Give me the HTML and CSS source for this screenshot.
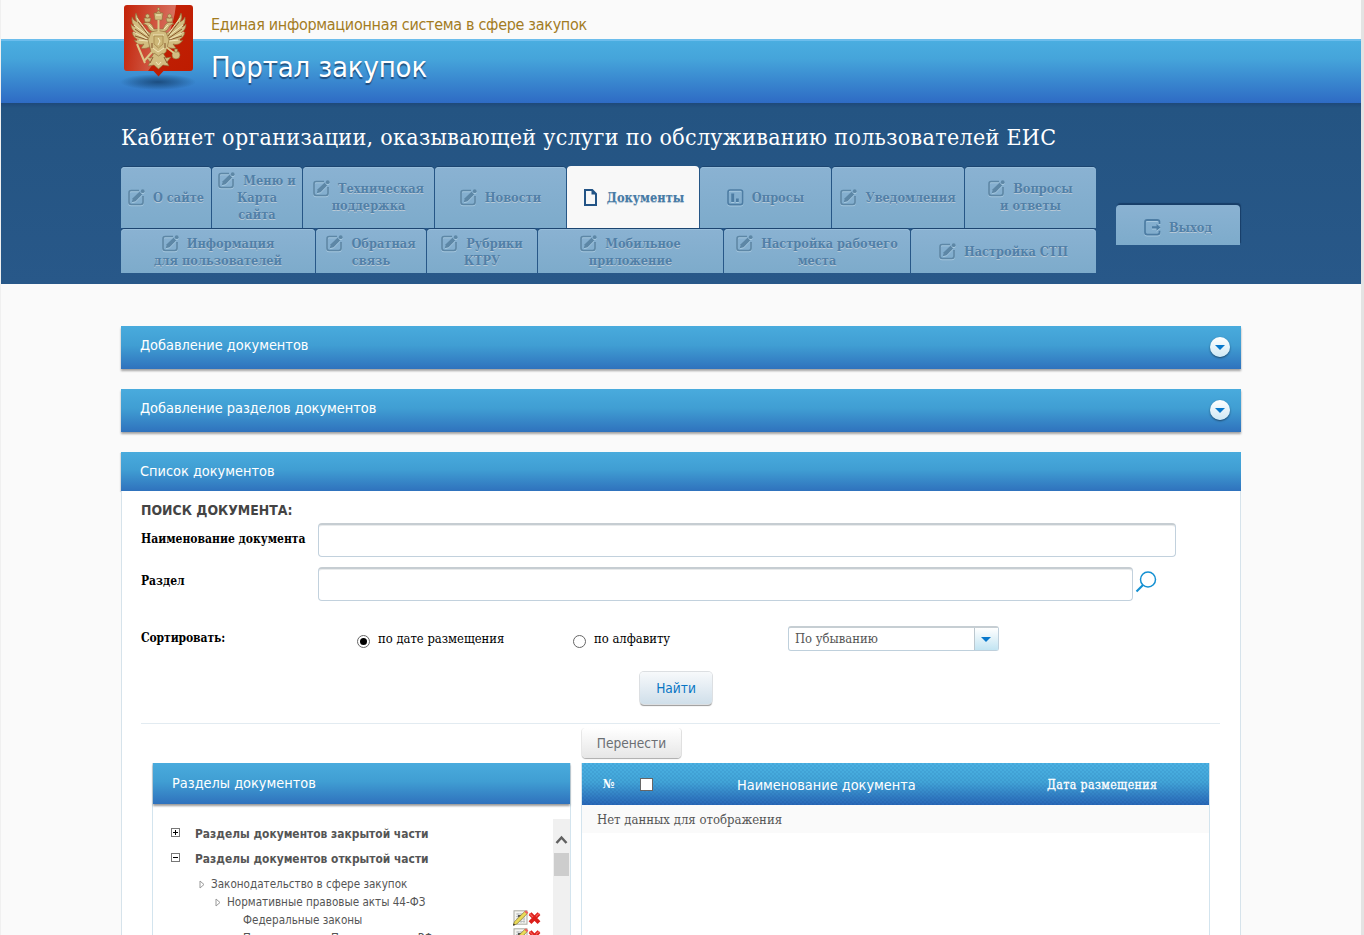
FILE: index.html
```html
<!DOCTYPE html>
<html lang="ru">
<head>
<meta charset="utf-8">
<title>Портал закупок</title>
<link rel="stylesheet" href="styles.css">
</head>
<body>
<svg class="defs" width="0" height="0">
  <defs>
    <linearGradient id="red" x1="0" y1="0" x2="1" y2="1"><stop offset="0" stop-color="#c42208"/><stop offset="1" stop-color="#bd1c00"/></linearGradient>
    <linearGradient id="shine" x1="0" y1="0" x2="1" y2=".2"><stop offset="0" stop-color="#fff" stop-opacity="0"/><stop offset="1" stop-color="#fff" stop-opacity=".38"/></linearGradient>
    <radialGradient id="shade"><stop offset="0" stop-color="#123a66" stop-opacity=".75"/><stop offset=".5" stop-color="#123a66" stop-opacity=".4"/><stop offset="1" stop-color="#123a66" stop-opacity="0"/></radialGradient>
  </defs>
  <symbol id="edit" viewBox="0 0 17 17"><path d="M11 1.500H3.200Q1 1.500 1 3.700v9.600q0 2.200 2.200 2.200h9.600q2.200 0 2.200-2.200V7" fill="none" stroke="currentColor" stroke-width="1.700"/><path d="M3.800 13.200l.9-3.900 6.800-6.500 2.700 2.700-6.600 6.700z" fill="currentColor"/><circle cx="14.700" cy="2.200" r="1.900" fill="currentColor"/></symbol>
  <symbol id="doc" viewBox="0 0 17 17"><path d="M3 1h7.200L14 5v11H3z" fill="none" stroke="currentColor" stroke-width="2"/><path d="M9.500 1v4.600H14z" fill="currentColor"/></symbol>
  <symbol id="poll" viewBox="0 0 17 17"><rect x="1" y="1" width="14.600" height="14.600" rx="2.200" fill="none" stroke="currentColor" stroke-width="1.700"/><path d="M4.200 4.500h3V13h-3zM9 9.500h2.800V13H9z" fill="currentColor"/></symbol>
  <symbol id="exit" viewBox="0 0 17 17"><path d="M15.500 5V3.300Q15.500 1 13.200 1H3.200Q1 1 1 3.300v10Q1 15.600 3.200 15.600h10q2.300 0 2.300-2.300v-1.500" fill="none" stroke="currentColor" stroke-width="1.800"/><path d="M8 7.200h4.500V5l4 3.400-4 3.400V9.500H8z" fill="currentColor"/></symbol>
  <symbol id="rowicons" viewBox="0 0 28 16">
    <rect x="1" y=".8" width="13" height="13.400" fill="#f4f4f0" stroke="#aaaaa2"/><path d="M3 4h9M3 6.500h9M3 9h9M3 11.500h9M5 3v10M8 3v10M11 3v10" stroke="#b4b9bb" stroke-width=".8"/><path d="M5 5h3v2H5z" fill="#555"/><path d="M.3 15.300l1.200-3.600L11.800 1.400l2.300 2.300L3.800 14z" fill="#eadb58" stroke="#88752d" stroke-width=".7"/><path d="M11.400 1.800L13 .3l2.400 2.200L13.900 4z" fill="#ef6460"/><path d="M0 15.500l.7-2 1.500 1.400z" fill="#222"/>
    <path d="M17 3.700l9 9M26 3.700l-9 9" stroke="#dc1e1a" stroke-width="4"/><path d="M16.500 3.500l3.500 3.500M26.200 3.200l-3.300 3.300" stroke="#f45c55" stroke-width="1.300"/>
  </symbol>
</svg>
<header class="top">
  <div class="wrap brand">
    <svg class="emblem" width="80" height="90" viewBox="0 0 80 90">
      <ellipse cx="38" cy="82" rx="38" ry="8" fill="url(#shade)"/>
      <path d="M5 5h65q3 0 3 3v60q0 3-3 3H43.500l-5 5.500-5-5.500H7q-3 0-3-3V8q0-3 3-3z" fill="url(#red)"/>
      <path d="M5 5h51Q52 40 28 71H7q-3 0-3-3V8q0-3 1-3z" fill="url(#shine)"/>
      <g fill="#d2bd80" stroke="#8d6b38" stroke-width=".6">
        <path d="M33 35Q21 29 16 13q-2 4 1 9-4-2-5-5-1 6 3 10-3-1-4-3 0 6 5 9-3 0-4-1 1 6 7 8-3 1-5 0 4 6 10 4-2 3-3 4 6 2 12-4z"/>
        <path d="M44 35q12-6 17-22 2 4-1 9 4-2 5-5 1 6-3 10 3-1 4-3 0 6-5 9 3 0 4-1-1 6-7 8 3 1 5 0-4 6-10 4 2 3 3 4-6 2-12-4z"/>
        <path d="M32 25q-4-5-9-1 4 0 5 3 1 4 6 5l4 1 5-1q5-1 6-5 1-3 5-3-5-4-9 1l-2 4h-9z"/>
        <path d="M31 32q7-3 15 0l3 8-3 12-7.500 6-7.500-6-3-12z"/>
        <path d="M34 53l4.500 3 4.500-3 3 5 5-1-4 5 2 4-6-1-4.500 4-4.500-4-6 1 2-4-4-5 5 1z"/>
        <path d="M34 13h9l-1 7h-7z"/><path d="M36 13q2.500-4 5 0z"/><circle cx="38.500" cy="9" r="1.300"/>
        <path d="M24 18h7l-1 4h-5zM46 18h7l-1 4h-5z"/><circle cx="27.500" cy="16" r="2"/><circle cx="49.500" cy="16" r="2"/>
        <circle cx="56" cy="55" r="4"/><path d="M54.500 49h3v3h-3z"/>
      </g>
      <path d="M17 44l8 19M24 61l8-9M54 53l-8-6M38.500 20v12" fill="none" stroke="#dcc889" stroke-width="2"/>
      <path d="M18 22l11 14M15 29l13 9M15 36l13 4M59 22L48 36M62 29l-13 9M62 36l-13 4M33 57l-3 6M44 57l3 6M32 43v5M45 43v5" stroke="#7e4b22" stroke-width=".9"/>
      <path d="M17 18l11 15M14 25l13 10M13 32l14 7M17 40l11 1M60 18L49 33M63 25L50 35M64 32l-14 7M60 40l-11 1M33 35h11M33 48l5 4 6-4M29 25l4 4M48 25l-4 4M36 15h5M36 62l2.500 3 2.500-3" fill="none" stroke="#f5ebc0" stroke-width=".9"/>
      <path d="M34 36h9v8l-4.500 4-4.500-4z" fill="#cdb777" stroke="#a48549" stroke-width=".8"/><path d="M38 38l2 3-2 4" fill="none" stroke="#f5ebc0"/>
    </svg>
    <div class="names">
      <div class="sys">Единая информационная система в сфере закупок</div>
      <div class="portal">Портал закупок</div>
    </div>
  </div>
</header>
<section class="cabinet">
  <div class="wrap">
    <h1>Кабинет организации, оказывающей услуги по обслуживанию пользователей ЕИС</h1>
    <div class="navline">
      <nav class="tabs">
        <div class="tabrow r1">
          <a class="tab"><span><svg class="ic"><use href="#edit"/></svg>О сайте</span></a>
          <a class="tab"><span><svg class="ic"><use href="#edit"/></svg>Меню и<br>Карта<br>сайта</span></a>
          <a class="tab"><span><svg class="ic"><use href="#edit"/></svg>Техническая<br>поддержка</span></a>
          <a class="tab"><span><svg class="ic"><use href="#edit"/></svg>Новости</span></a>
          <a class="tab active"><span><svg class="ic"><use href="#doc"/></svg>Документы</span></a>
          <a class="tab"><span><svg class="ic slate"><use href="#poll"/></svg>Опросы</span></a>
          <a class="tab"><span><svg class="ic"><use href="#edit"/></svg>Уведомления</span></a>
          <a class="tab"><span><svg class="ic"><use href="#edit"/></svg>Вопросы<br>и ответы</span></a>
        </div>
        <div class="tabrow r2">
          <a class="tab"><span><svg class="ic"><use href="#edit"/></svg>Информация<br>для пользователей</span></a>
          <a class="tab"><span><svg class="ic"><use href="#edit"/></svg>Обратная<br>связь</span></a>
          <a class="tab"><span><svg class="ic"><use href="#edit"/></svg>Рубрики<br>КТРУ</span></a>
          <a class="tab"><span><svg class="ic"><use href="#edit"/></svg>Мобильное<br>приложение</span></a>
          <a class="tab"><span><svg class="ic"><use href="#edit"/></svg>Настройка рабочего<br>места</span></a>
          <a class="tab"><span><svg class="ic"><use href="#edit"/></svg>Настройка СТП</span></a>
        </div>
      </nav>
      <a class="tab exit"><span><svg class="ic slate"><use href="#exit"/></svg>Выход</span></a>
    </div>
  </div>
</section>
<main class="wrap content">
  <div class="bar">Добавление документов<i class="knob"></i></div>
  <div class="bar">Добавление разделов документов<i class="knob"></i></div>
  <div class="bar open">Список документов</div>
  <div class="panel">
    <h2>ПОИСК ДОКУМЕНТА:</h2>
    <div class="field"><label>Наименование документа</label><div class="input wide"></div></div>
    <div class="field second"><label>Раздел</label><div class="input"></div>
      <svg class="lens" width="22" height="22" viewBox="0 0 22 22"><circle cx="13" cy="8.500" r="7.500" fill="none" stroke="#1490d2" stroke-width="1.500"/><path d="M8 14L1.500 20.500" stroke="#1490d2" stroke-width="2.200"/></svg>
    </div>
    <div class="sort">
      <label>Сортировать:</label>
      <span class="opt"><i class="radio on"></i>по дате размещения</span>
      <span class="opt"><i class="radio"></i>по алфавиту</span>
      <div class="select"><span>По убыванию</span><i></i></div>
    </div>
    <div class="find"><a class="btn">Найти</a></div>
    <div class="rule"></div>
    <div class="cols">
      <section class="tree">
        <div class="treehead">Разделы документов</div>
        <div class="treebody">
          <div class="nodes">
            <div class="node root"><i class="box plus"></i><b>Разделы документов закрытой части</b></div>
            <div class="node root"><i class="box"></i><b>Разделы документов открытой части</b></div>
            <div class="node n1"><svg width="7" height="9"><path d="M1 1l4 3.500-4 3.500z" fill="#fff" stroke="#999"/></svg>Законодательство в сфере закупок</div>
            <div class="node n2"><svg width="7" height="9"><path d="M1 1l4 3.500-4 3.500z" fill="#fff" stroke="#999"/></svg>Нормативные правовые акты 44-ФЗ</div>
            <div class="node n3">Федеральные законы<svg class="acts" width="28" height="16"><use href="#rowicons"/></svg></div>
            <div class="node n3">Постановления Правительства РФ<svg class="acts" width="28" height="16"><use href="#rowicons"/></svg></div>
          </div>
          <div class="scroll"><svg width="13" height="10" viewBox="0 0 13 10"><path d="M1.500 8L6.500 2.500l5 5.500" fill="none" stroke="#606060" stroke-width="2.500"/></svg><i></i></div>
        </div>
      </section>
      <section class="list">
        <a class="btn move">Перенести</a>
        <div class="listbox">
          <div class="listhead"><span class="num">№</span><i class="check"></i><span class="name">Наименование документа</span><span class="date">Дата размещения</span></div>
          <div class="empty">Нет данных для отображения</div>
        </div>
      </section>
    </div>
  </div>
</main>
</body>
</html>
```
FILE: styles.css
```css
* { box-sizing: border-box; }
html, body { height: 935px; overflow: hidden; }
body { margin: 0; background: #fafafa; border-left: 1px solid #f0f0f0; border-right: 3px solid #e3e3e3; font-family: Tahoma, "DejaVu Sans Condensed", "DejaVu Sans", sans-serif; font-stretch: condensed; color: #555; }
.defs { position: absolute; }
.wrap { width: 1120px; margin-left: 120px; }
.top { height: 104px; background: linear-gradient(#6cbdec 0 2px, #4aade0 2px, #45a4da 20px, #2e6bc4 64px, #1f4a7a 64px) 0 39px / 100% 65px no-repeat; }
.brand { display: flex; height: 104px; }
.emblem { flex: none; margin-left: -1px; }
.names { margin-left: 11px; white-space: nowrap; }
.sys { height: 39px; padding-top: 14px; font-size: 16px; line-height: 22px; letter-spacing: -.3px; color: #a37c1f; }
.portal { padding-top: 10px; font-size: 29px; line-height: 37px; letter-spacing: -.15px; color: #fff; text-shadow: 0 2px 1px rgba(20,50,90,.7); }
.cabinet { height: 180px; background: linear-gradient(#1f4b7b, #245482 4px, #285889); overflow: hidden; font-family: "Roboto Slab", "DejaVu Serif Condensed", "DejaVu Serif", serif; }
h1 { margin: 19px 0 15px; height: 29px; font-size: 23px; line-height: 28px; letter-spacing: .31px; font-weight: 400; color: #fff; white-space: nowrap; }
.navline { display: flex; gap: 20px; }
.tabs { width: 975px; display: grid; gap: 1px; }
.tabrow { display: grid; gap: 1px; }
.r1 { height: 61px; grid-template-columns: 90px 90px 131px 131px 132px 131px 132px 131px; }
.r2 { height: 44px; grid-template-columns: 194px 110px 110px 185px 186px 185px; }
.tab { display: flex; align-items: center; justify-content: center; text-align: center; white-space: nowrap; font-size: 12.700px; line-height: 17px; font-weight: 700; color: #5180a8; background: linear-gradient(#8ab2d2, #7dabcb); border-radius: 4px 4px 0 0; box-shadow: 0 -1px 0 #1c4570, inset 0 1px 0 #98bedb; text-shadow: 0 1px 0 #b9c9d6; }
.r1 .tab { padding-bottom: 1px; }
.r2 .tab { padding-top: 1px; }
.ic { width: 17px; height: 17px; margin: -3px 8px -3px 0; vertical-align: -1px; color: #5d87a6; filter: drop-shadow(0 1px 0 #a6c8df); overflow: visible; }
.slate { color: #4d7da4; }
.active { background: #f8f8f8; box-shadow: 0 -1px 0 #f8f8f8; color: #477ba6; }
.active .ic { color: #235486; filter: none; }
.exit { width: 124px; height: 40px; margin-top: 38px; padding-top: 5px; box-shadow: 1px -2px 1px #183e68; }
.content { padding-top: 42px; }
.bar { height: 43px; margin-bottom: 20px; padding: 0 11px 0 19px; display: flex; justify-content: space-between; font-size: 14.400px; line-height: 39px; color: #fff; background: linear-gradient(#49abdd, #409ed3 45%, #2f72bd); box-shadow: 0 2px 2px rgba(0,0,0,.35); }
.bar.open { height: 39px; margin-bottom: 0; box-shadow: -1px 1px 1px rgba(0,0,0,.12); }
.knob { width: 20px; height: 20px; margin-top: 11px; border-radius: 50%; background: linear-gradient(#fff, #cfe8f4); box-shadow: 0 1px 2px rgba(0,0,0,.5); display: grid; place-items: center; }
.knob::before { content: ""; border: 5px solid transparent; border-top-color: #0878cc; border-bottom: 0; }
.panel { height: 444px; overflow: hidden; padding: 0 20px 0 19px; background: #fff; border: 1px solid #d6e3eb; border-width: 0 1px; }
h2 { margin: 0; height: 32px; padding-top: 9px; font-size: 13.900px; line-height: 20px; color: #444; }
.field, .sort, .list { font-family: "Roboto Slab", "DejaVu Serif Condensed", "DejaVu Serif", serif; }
.field { display: flex; height: 44px; color: #000; }
.field label, .sort label { width: 177px; font-size: 12px; line-height: 33px; font-weight: 700; white-space: nowrap; color: #000; }
.sort label { line-height: 31px; letter-spacing: -.1px; }
.field.second label { line-height: 29px; }
.input { width: 815px; height: 34px; border: 1px solid #c2d1dd; border-top: 2px solid #c6cdd2; border-radius: 4px; box-shadow: inset 0 1px 0 #e9ebec; }
.input.wide { width: 858px; }
.lens { margin: 4px 0 0 2px; }
.sort { display: flex; margin-top: 12px; height: 34px; font-size: 12.900px; line-height: 31px; color: #000; }
.opt { display: flex; width: 216px; white-space: nowrap; }
.sort label + .opt { margin-left: 39px; }
.radio { width: 13px; height: 13px; margin: 12px 8px 0 0; border: 1px solid #666; border-radius: 50%; background: #fff; display: grid; place-items: center; }
.radio.on::before { content: ""; width: 7px; height: 7px; border-radius: 50%; background: #000; }
.select { width: 211px; height: 25px; margin: 3px 0 0 -1px; border: 1px solid #bfd0dc; border-top: 2px solid #c6ced3; border-bottom-width: 1px; border-radius: 3px; display: flex; line-height: 21px; color: #555; }
.select > span { flex: 1; padding-left: 6px; }
.select i { width: 24px; padding-right: 1px; background: linear-gradient(#fff, #c2e4f2); border-left: 1px solid #bcc8cf; display: grid; place-items: center; }
.select i::before { content: ""; border: 5px solid transparent; border-top-color: #0878cc; border-bottom: 0; }
.find { height: 66px; padding: 15px 0 0 499px; }
.btn { display: block; width: 72px; height: 32px; text-align: center; font: 13.600px/32px Tahoma, "DejaVu Sans Condensed", "DejaVu Sans", sans-serif; font-stretch: condensed; color: #0975c4; border-radius: 4px; background: linear-gradient(#f7f9fb, #d0dfea); box-shadow: 0 0 0 1px #dcdfe2, 0 2px 1px #999; }
.rule { height: 1px; width: 1079px; background: #e2ebf1; }
.cols { display: flex; gap: 11px; padding: 4px 0 0 11px; }
.tree { width: 419px; height: 500px; margin-top: 35px; border: 1px solid #d3e4ee; border-top: 0; }
.treehead { height: 41px; padding-left: 19px; font-size: 14.400px; line-height: 41px; color: #fff; background: linear-gradient(#49abdd, #409ed3 45%, #2f72bd); box-shadow: 0 2px 2px rgba(0,0,0,.4); }
.treebody { display: flex; margin-top: 15px; }
.nodes { width: 400px; padding-top: 2px; font-size: 11.600px; }
.node { display: flex; align-items: center; height: 18px; white-space: nowrap; }
.node.root { height: 25px; padding-left: 18px; font-size: 11.900px; }
.node.root + .n1 { margin-top: 4px; }
.box { width: 9px; height: 9px; margin: -3px 15px 0 0; border: 1px solid #777; background: linear-gradient(#000, #000) center / 5px 1px no-repeat; }
.plus { background: linear-gradient(#000, #000) center / 5px 1px no-repeat, linear-gradient(#000, #000) center / 1px 5px no-repeat; }
.n1 { padding-left: 46px; }
.n2 { padding-left: 62px; }
.node svg { margin-right: 5px; }
.n3 { padding-left: 90px; }
.node .acts { margin: -4px 12px 0 auto; }
.scroll { width: 17px; background: #f0f0f0; padding-top: 16px; text-align: center; line-height: 0; height: 450px; }
.scroll i { display: block; width: 15px; height: 23px; margin: 8px auto 0; background: #cdcdcd; }
.list { width: 628px; }
.move { width: 99px; height: 30px; margin: 0 0 5px 0; color: #6b6f73; line-height: 31px; background: linear-gradient(#fff, #e6e6e6); box-shadow: 0 1px 1px #aaa, 1px 0 0 #e6e6e6, -1px 0 0 #eee; }
.listbox { height: 500px; border: 1px solid #d3e4ee; border-width: 0 1px; margin-left: -1px; }
.listhead { height: 42px; display: flex; align-items: center; font-size: 12.200px; color: #fff; white-space: nowrap; background: repeating-conic-gradient(rgba(0,40,110,.08) 0 25%, transparent 0 50%) 0 0 / 4px 4px, linear-gradient(#4bb2e3, #42a5d8 45%, #2867b7); }
.num { width: 38px; padding-left: 21px; font-weight: 700; }
.check { width: 13px; height: 13px; margin-left: 20px; border: 1px solid #666; background: #fff; }
.name { margin-left: 84px; width: 310px; padding-top: 1px; font: 14.400px Tahoma, "DejaVu Sans Condensed", "DejaVu Sans", sans-serif; font-stretch: condensed; }
.date { letter-spacing: .4px; padding-top: 1px; -webkit-text-stroke: .3px #fff; }
.empty { height: 28px; padding-left: 15px; background: #fafafa; font-size: 13px; line-height: 29px; }
```
